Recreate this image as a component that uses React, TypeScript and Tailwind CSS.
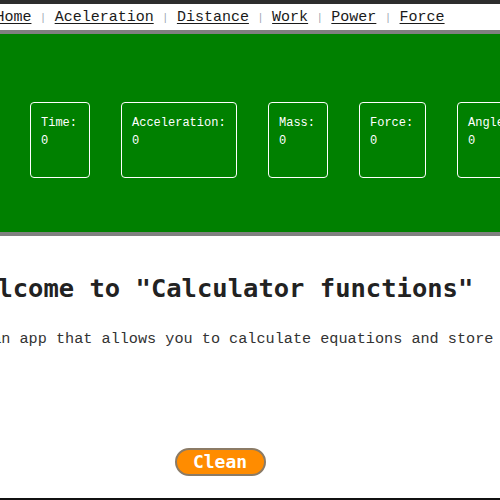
import React from "react";

const links = ["Home", "Aceleration", "Distance", "Work", "Power", "Force"];

const cards = [
  { label: "Time:", value: "0", width: "w-[60px]" },
  { label: "Acceleration:", value: "0", width: "w-[116px]" },
  { label: "Mass:", value: "0", width: "w-[60px]" },
  { label: "Force:", value: "0", width: "w-[67px]" },
  { label: "Angle:", value: "0", width: "w-[67px]" },
];

const mono = "font-['Liberation_Mono',monospace]";
const heavy = "font-['DejaVu_Sans_Mono',monospace]";

export default function App() {
  return (
    <div className="flex h-[500px] w-[500px] flex-col overflow-hidden bg-white">
      {/* nav */}
      <div className="border-t-4 border-[#2d2d2d]">
        <nav
          className={`flex h-[26px] w-[440px] items-center justify-center gap-[8.6px] whitespace-nowrap pt-[2px] text-[15px] text-[#1a1a1a] ${mono}`}
        >
          {links.map((link, i) => (
            <React.Fragment key={link}>
              {i > 0 && (
                <span className="text-[10px] text-gray-400">|</span>
              )}
              <a href="#" className="underline underline-offset-2">
                {link}
              </a>
            </React.Fragment>
          ))}
        </nav>
      </div>

      {/* stats */}
      <section className="border-y-4 border-[#808080] bg-[#008000] pt-[68px] pb-[54px]">
        <div className="flex gap-[31px] pl-[30px]">
          {cards.map((card) => (
            <div
              key={card.label}
              className={`${card.width} h-[76px] shrink-0 rounded-[4px] border-[1.5px] border-white pt-[11px] pl-[10px] text-[12px] leading-[18px] text-white ${mono}`}
            >
              <p className="whitespace-nowrap">{card.label}</p>
              <p>{card.value}</p>
            </div>
          ))}
        </div>
      </section>

      {/* intro */}
      <main className="flex w-[440px] flex-1 flex-col items-center">
        <h1
          className={`mt-[37px] whitespace-nowrap text-[25.5px] leading-[30px] font-bold text-[#222] ${heavy}`}
        >
          Welcome to "Calculator functions"
        </h1>
        <p
          className={`mt-[26px] whitespace-nowrap text-[15.2px] leading-[20px] text-[#333] ${mono}`}
        >
          This is an app that allows you to calculate equations and store it
        </p>
        <button
          className={`mt-[99px] h-[28px] w-[91px] rounded-full border-2 border-[#8b7b66] bg-[#ff8c00] text-[18px] font-bold leading-none text-white ${heavy}`}
        >
          Clean
        </button>
      </main>

      <footer className="h-[2px] bg-[#111]" />
    </div>
  );
}
